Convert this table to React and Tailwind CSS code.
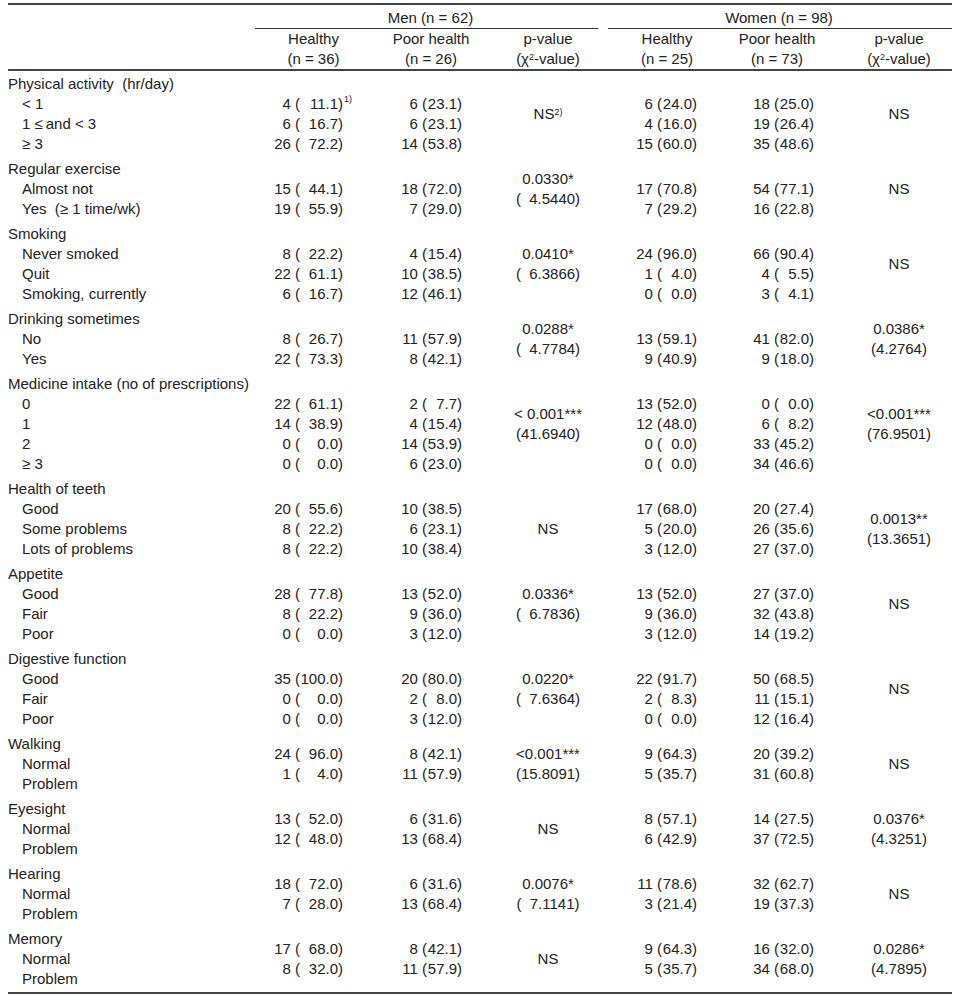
import clsx from 'clsx';

const COLS = 'grid grid-cols-[247px_117px_118px_116px_122px_98px_126px]';

// each group: label + sub items, men/women counts as [n, pct], p-value lines
const groups = [
  {
    label: 'Physical activity  (hr/day)',
    items: ['< 1', '1 ≤\u2009and < 3', '≥ 3'],
    mh: [[4, '11.1'], [6, '16.7'], [26, '72.2']],
    mp: [[6, '23.1'], [6, '23.1'], [14, '53.8']],
    mv: [<>NS<sup className="text-[9px]">2)</sup></>],
    wh: [[6, '24.0'], [4, '16.0'], [15, '60.0']],
    wp: [[18, '25.0'], [19, '26.4'], [35, '48.6']],
    wv: ['NS'],
    note: true,
  },
  {
    label: 'Regular exercise',
    items: ['Almost not', 'Yes  (≥ 1 time/wk)'],
    mh: [[15, '44.1'], [19, '55.9']],
    mp: [[18, '72.0'], [7, '29.0']],
    mv: ['0.0330*', '(\u20074.5440)'],
    wh: [[17, '70.8'], [7, '29.2']],
    wp: [[54, '77.1'], [16, '22.8']],
    wv: ['NS'],
  },
  {
    label: 'Smoking',
    items: ['Never smoked', 'Quit', 'Smoking, currently'],
    mh: [[8, '22.2'], [22, '61.1'], [6, '16.7']],
    mp: [[4, '15.4'], [10, '38.5'], [12, '46.1']],
    mv: ['0.0410*', '(\u20076.3866)'],
    wh: [[24, '96.0'], [1, '4.0'], [0, '0.0']],
    wp: [[66, '90.4'], [4, '5.5'], [3, '4.1']],
    wv: ['NS'],
  },
  {
    label: 'Drinking sometimes',
    items: ['No', 'Yes'],
    mh: [[8, '26.7'], [22, '73.3']],
    mp: [[11, '57.9'], [8, '42.1']],
    mv: ['0.0288*', '(\u20074.7784)'],
    wh: [[13, '59.1'], [9, '40.9']],
    wp: [[41, '82.0'], [9, '18.0']],
    wv: ['0.0386*', '(4.2764)'],
  },
  {
    label: 'Medicine intake (no of prescriptions)',
    items: ['0', '1', '2', '≥ 3'],
    mh: [[22, '61.1'], [14, '38.9'], [0, '0.0'], [0, '0.0']],
    mp: [[2, '7.7'], [4, '15.4'], [14, '53.9'], [6, '23.0']],
    mv: ['< 0.001***', '(41.6940)'],
    wh: [[13, '52.0'], [12, '48.0'], [0, '0.0'], [0, '0.0']],
    wp: [[0, '0.0'], [6, '8.2'], [33, '45.2'], [34, '46.6']],
    wv: ['<0.001***', '(76.9501)'],
  },
  {
    label: 'Health of teeth',
    items: ['Good', 'Some problems', 'Lots of problems'],
    mh: [[20, '55.6'], [8, '22.2'], [8, '22.2']],
    mp: [[10, '38.5'], [6, '23.1'], [10, '38.4']],
    mv: ['NS'],
    wh: [[17, '68.0'], [5, '20.0'], [3, '12.0']],
    wp: [[20, '27.4'], [26, '35.6'], [27, '37.0']],
    wv: ['0.0013**', '(13.3651)'],
    pvData: true,
  },
  {
    label: 'Appetite',
    items: ['Good', 'Fair', 'Poor'],
    mh: [[28, '77.8'], [8, '22.2'], [0, '0.0']],
    mp: [[13, '52.0'], [9, '36.0'], [3, '12.0']],
    mv: ['0.0336*', '(\u20076.7836)'],
    wh: [[13, '52.0'], [9, '36.0'], [3, '12.0']],
    wp: [[27, '37.0'], [32, '43.8'], [14, '19.2']],
    wv: ['NS'],
  },
  {
    label: 'Digestive function',
    items: ['Good', 'Fair', 'Poor'],
    mh: [[35, '100.0'], [0, '0.0'], [0, '0.0']],
    mp: [[20, '80.0'], [2, '8.0'], [3, '12.0']],
    mv: ['0.0220*', '(\u20077.6364)'],
    wh: [[22, '91.7'], [2, '8.3'], [0, '0.0']],
    wp: [[50, '68.5'], [11, '15.1'], [12, '16.4']],
    wv: ['NS'],
  },
  {
    label: 'Walking',
    items: ['Normal', 'Problem'],
    mh: [[24, '96.0'], [1, '4.0']],
    mp: [[8, '42.1'], [11, '57.9']],
    mv: ['<0.001***', '(15.8091)'],
    wh: [[9, '64.3'], [5, '35.7']],
    wp: [[20, '39.2'], [31, '60.8']],
    wv: ['NS'],
    center: true,
  },
  {
    label: 'Eyesight',
    items: ['Normal', 'Problem'],
    mh: [[13, '52.0'], [12, '48.0']],
    mp: [[6, '31.6'], [13, '68.4']],
    mv: ['NS'],
    wh: [[8, '57.1'], [6, '42.9']],
    wp: [[14, '27.5'], [37, '72.5']],
    wv: ['0.0376*', '(4.3251)'],
    center: true,
  },
  {
    label: 'Hearing',
    items: ['Normal', 'Problem'],
    mh: [[18, '72.0'], [7, '28.0']],
    mp: [[6, '31.6'], [13, '68.4']],
    mv: ['0.0076*', '(\u20077.1141)'],
    wh: [[11, '78.6'], [3, '21.4']],
    wp: [[32, '62.7'], [19, '37.3']],
    wv: ['NS'],
    center: true,
  },
  {
    label: 'Memory',
    items: ['Normal', 'Problem'],
    mh: [[17, '68.0'], [8, '32.0']],
    mp: [[8, '42.1'], [11, '57.9']],
    mv: ['NS'],
    wh: [[9, '64.3'], [5, '35.7']],
    wp: [[16, '32.0'], [34, '68.0']],
    wv: ['0.0286*', '(4.7895)'],
    center: true,
  },
];

function Cell({ n, pct, wide, note }) {
  return (
    <div className="relative flex justify-end whitespace-pre">
      <span className="w-[17px] text-right">{n}</span>
      <span> (</span>
      <span className={clsx('text-right', wide ? 'w-[38px]' : 'w-[30px]')}>{pct}</span>
      <span>)</span>
      {note && (
        <span className="absolute left-full top-[-1px] pl-[1px] text-[9px] leading-[12px]">1)</span>
      )}
    </div>
  );
}

function DataCol({ rows, pad, center, wide, note }) {
  return (
    <div className={clsx('flex flex-col', center ? 'justify-center' : 'pt-[20px]', pad)}>
      {rows.map(([n, pct], i) => (
        <Cell key={i} n={n} pct={pct} wide={wide} note={note && i === 0} />
      ))}
    </div>
  );
}

function PCol({ lines, pad, dataOnly }) {
  return (
    <div className={clsx('flex flex-col items-center justify-center whitespace-pre', dataOnly && 'pt-[20px]', pad)}>
      {lines.map((l, i) => (
        <div key={i}>{l}</div>
      ))}
    </div>
  );
}

function Group({ g }) {
  return (
    <div className={COLS}>
      <div>
        <div className="whitespace-pre">{g.label}</div>
        {g.items.map((it) => (
          <div key={it} className="pl-[14px] whitespace-pre">{it}</div>
        ))}
      </div>
      <DataCol rows={g.mh} pad="pr-[29px]" center={g.center} wide note={g.note} />
      <DataCol rows={g.mp} pad="pr-[28px]" center={g.center} />
      <PCol lines={g.mv} dataOnly={g.pvData} />
      <DataCol rows={g.wh} pad="pr-[31px]" center={g.center} />
      <DataCol rows={g.wp} pad="pr-[12px]" center={g.center} />
      <PCol lines={g.wv} pad="pl-[20px]" dataOnly={g.pvData} />
    </div>
  );
}

function Head({ top, bottom, pad }) {
  return (
    <div className={clsx('text-center', pad)}>
      <div>{top}</div>
      <div>{bottom}</div>
    </div>
  );
}

export default function App() {
  return (
    <div className="min-h-screen bg-white pt-[3px] font-['Liberation_Sans',Arial,sans-serif] text-[15px] leading-[20px] text-[#222]">
      <div className="ml-[8px] w-[944px]">
        <div className="h-[2px] bg-[#444]" />

        {/* Header */}
        <div className={COLS}>
          <div className="row-span-2" />
          <div className="col-span-3 pt-[3px]">
            <div className="text-center">Men (n = 62)</div>
            <div className="mr-[8px] h-px bg-[#333]" />
          </div>
          <div className="col-span-3 pt-[3px]">
            <div className="text-center">Women (n = 98)</div>
            <div className="ml-[2px] h-px bg-[#333]" />
          </div>
          <Head top="Healthy" bottom="(n = 36)" />
          <Head top="Poor health" bottom="(n = 26)" />
          <Head top="p-value" bottom={<>(χ<sup className="text-[9px]">2</sup>-value)</>} />
          <Head top="Healthy" bottom="(n = 25)" />
          <Head top="Poor health" bottom="(n = 73)" />
          <Head top="p-value" bottom={<>(χ<sup className="text-[9px]">2</sup>-value)</>} pad="pl-[20px]" />
        </div>

        <div className="h-[2px] bg-[#444]" />

        {/* Body */}
        <div className="flex flex-col gap-[5px] pt-[3px] pb-[3px]">
          {groups.map((g) => (
            <Group key={g.label} g={g} />
          ))}
        </div>

        <div className="h-[2px] bg-[#444]" />
      </div>
    </div>
  );
}
